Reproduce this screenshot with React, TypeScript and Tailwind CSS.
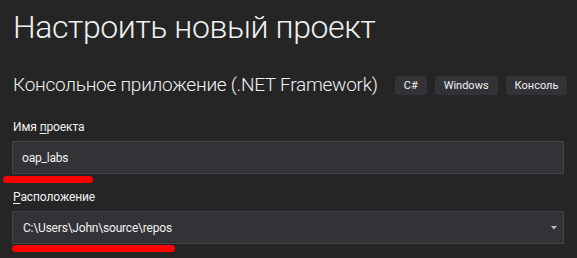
export default function App() {
  return (
    <div
      className="relative w-[577px] h-[258px] bg-[#252526] text-[#f1f1f1] overflow-hidden pl-[12px]"
      style={{ fontFamily: 'Roboto, "Noto Sans", sans-serif' }}
    >
      <h1 className="pt-[4px] pl-[1px] text-[32px] font-light leading-[46px] tracking-[-0.4px] whitespace-nowrap">
        Настроить новый проект
      </h1>

      <div className="mt-[25px] flex items-center h-[20px]">
        <h2 className="pl-[1px] text-[19px] font-light leading-[20px] tracking-[-0.25px] whitespace-nowrap">
          Консольное приложение (.NET Framework)
        </h2>
        <div className="ml-[17px] flex gap-[8px]">
          <span className="h-[19px] px-[9px] rounded-[3px] bg-[#333337] text-[11px] leading-[19px] text-[#f1f1f1]">C#</span>
          <span className="h-[19px] px-[9px] rounded-[3px] bg-[#333337] text-[11px] leading-[19px] text-[#f1f1f1]">Windows</span>
          <span className="h-[19px] px-[9px] rounded-[3px] bg-[#333337] text-[11px] leading-[19px] text-[#f1f1f1]">Консоль</span>
        </div>
      </div>

      <div className="mt-[24px] pl-[1px] text-[12px] leading-[17px] tracking-[-0.1px]">
        Имя <span className="underline underline-offset-2">п</span>роекта
      </div>
      <div className="mt-[5px] w-[552px] h-[33px] border border-[#434346] bg-[#333337] flex items-center pl-[9px] text-[12px] tracking-[-0.2px]">
        oap_labs
      </div>

      <div className="mt-[15px] pl-[1px] text-[12px] leading-[17px] tracking-[-0.1px]">
        <span className="underline underline-offset-2">Р</span>асположение
      </div>
      <div className="mt-[5px] w-[552px] h-[33px] border border-[#434346] bg-[#333337] flex items-center justify-between pl-[10px] pr-[6px] text-[12px] tracking-[-0.2px]">
        <span>C:\Users\John\source\repos</span>
        <svg width="6" height="4" viewBox="0 0 6 4">
          <path d="M0 0 H6 L3 3.5 Z" fill="#bdbdbd" />
        </svg>
      </div>

      {/* red marker annotations */}
      <div className="absolute left-[3px] top-[176px] w-[90px] h-[7px] rounded-full bg-[#ff0000]" />
      <div className="absolute left-[12px] top-[245px] w-[163px] h-[7px] rounded-full bg-[#ff0000]" />
    </div>
  );
}
